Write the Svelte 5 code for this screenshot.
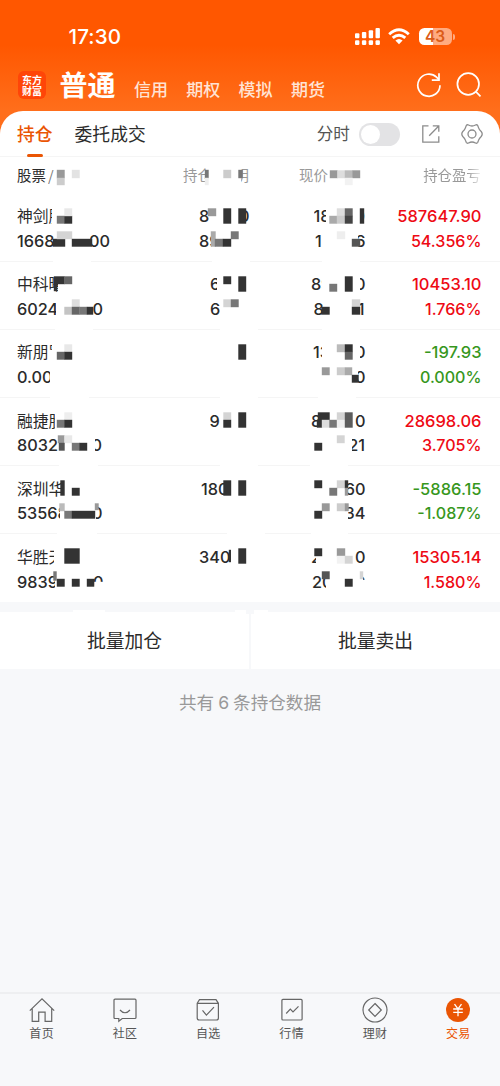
<script>
  const D = '#333', G = '#777', M = '#999', L = '#d4d4d4', X = '#eee', W = '#fff';

  // text fragment: [text, left edge, right edge, aligned to its right edge]
  // block: [x, y, width, height, fill], with y counted from the row's top
  const head = {
    line: [['股票', 17, 46], ['/', 48, 54, 0, 'slash'], ['持仓', 183, 206, 0, 'dim'], ['明', 241, 249, 1, 'dim'], ['现价', 299, 328, 0, 'dim'], ['持仓盈亏', 423.2, 482, 0, 'dim fade']],
    blocks: [[57,13,7.5,8,M],[57,21,7.5,7,'#ccc'],[72,13,7.5,8,'#e3e3e3'],[205,13,3.5,8,G],[205,21,3.5,7,X],[223.5,13,7.5,8,'#ccc'],[238.5,13,4,8,G],[330,13.5,7.5,7.5,M],[337.5,13.5,7.5,7.5,'#ddd'],[345,13.5,7.5,7.5,'#bbb'],[352.5,13.5,7.5,7.5,M],[345,21,7.5,7,'#f2f2f2']]
  };

  const rows = [
    { c: 'up', pl: '587647.90', pct: '54.356%',
      a: [['神剑股', 17, 51.5], ['8', 199, 209], ['0', 243, 249.5, 1], ['18', 313.5, 326], ['0', 360, 365, 1]],
      b: [['1668', 17, 54], ['00', 90, 110, 1], ['89', 199, 212], ['1', 315, 323], ['6', 358, 365.5, 1]],
      blocks: [[57,22,7.5,7.5,G],[64.5,22,7.5,7.5,D],[64.5,14.5,7.5,7.5,'#e8e8e8'],[53,45,12,7.5,D],[57,37.5,15,7.5,L],[72,45,20,7.5,D],[208,14.5,8,7.5,M],[223.5,14.5,7.5,15,D],[238.5,14.5,7.5,15,D],[211,37.5,4.5,15,'#aaa'],[215,45,8,7.5,G],[223,45,8,7.5,D],[231,37.5,7.5,7.5,G],[329.5,22,7.5,7.5,'#aaa'],[337,14.5,8,7.5,'#ddd'],[337,22,8,7.5,'#ccc'],[345,14.5,7.5,7.5,'#666'],[345,22,7.5,7.5,'#444'],[360,14.5,4,15,D],[337,37.5,8,7.5,X],[352,45,8,7.5,'#555']],
      gaps: [[53,91],[212,250],[322,360]] },
    { c: 'up', pl: '10453.10', pct: '1.766%',
      a: [['中科曙', 17, 57.5], ['6', 210, 217], ['89', 311, 321.5], ['0', 360, 365.5, 1]],
      b: [['6024', 17, 56], ['0', 93, 103, 1], ['6', 210, 220], ['8', 313.5, 323], ['1', 358, 364.5, 1]],
      blocks: [[54,14.5,10.5,7.5,D],[64.5,14.5,7.5,7.5,'#666'],[54,22,3,7,D],[64.5,45,7.5,7.5,'#c4c4c4'],[72,37.5,7.5,7.5,'#ddd'],[72,45,7.5,7.5,'#666'],[79.5,45,7.5,7.5,G],[87,45,6,7.5,D],[223.5,14.5,7.5,7.5,D],[238.5,14.5,7.5,15,D],[223.5,37.5,7.5,7.5,L],[231,37.5,7.5,7.5,G],[329.5,22,7.5,7.5,G],[345,14.5,7.5,15,D],[321.5,45,8,7.5,D],[352,37.5,8,7.5,L],[352,45,8,7.5,D]],
      gaps: [[55,93],[220,258],[322,360]] },
    { c: 'down', pl: '-197.93', pct: '0.000%',
      a: [['新朋股', 17, 52], ['13', 313, 321.5], ['0', 360, 365.5, 1]],
      b: [['0.00', 17, 49.5], ['0', 357.5, 365.5, 1]],
      blocks: [[48,20,5,12,W],[64.5,14.5,7.5,7.5,'#e8e8e8'],[57,22,7.5,7.5,'#666'],[64.5,22,7.5,7.5,D],[238.5,14.5,7.5,15,D],[337,14.5,8,7.5,'#bbb'],[345,14.5,7.5,7.5,D],[345,22,7.5,7.5,'#666'],[322,37.5,7.5,7.5,M],[337,37.5,8,7.5,'#ccc'],[345,37.5,7,7.5,'#aaa'],[352,45,6.5,7.5,D]],
      gaps: [[50,89],[220,258],[318,356]] },
    { c: 'up', pl: '28698.06', pct: '3.705%',
      a: [['融捷股', 17, 54.5], ['9', 209.5, 220], ['8', 311, 319], ['0', 354, 365.5, 1]],
      b: [['80321', 17, 60], ['0', 95, 102, 1], ['21', 352, 365, 1]],
      blocks: [[64.5,14.5,7.5,7.5,X],[57,22,7.5,7.5,G],[64.5,22,7.5,7.5,D],[58,37.5,6.5,7.5,M],[64.5,37.5,7.5,7.5,'#e8e8e8'],[59,45,5.5,7.5,'#555'],[72,45,7.5,7.5,G],[79.5,45,7.5,7.5,D],[223.5,14.5,7.5,7.5,L],[223.5,22,7.5,7.5,D],[238.5,14.5,7.5,15,D],[318,14.5,11.5,7.5,D],[317,22,5,7.5,D],[322,22,7.5,7.5,'#ddd'],[329.5,22,7.5,7.5,G],[337,14.5,8,7.5,L],[337,22,8,7.5,'#eee'],[345,14.5,7.5,15,'#5c5c5c'],[314.5,45,7.5,7.5,D],[337,37.5,7.5,7.5,L]],
      gaps: [[59,98],[220,258],[310,348]] },
    { c: 'down', pl: '-5886.15', pct: '-1.087%',
      a: [['深圳华', 17, 61.5], ['180', 201, 224], ['60', 346, 365.5, 1]],
      b: [['53568', 17, 59.5], ['0', 96, 102.5, 1], ['34', 348, 365.5, 1]],
      blocks: [[60.5,14.5,4,15,D],[72,22,7.5,7.5,D],[59.5,37.5,5,7.5,'#bbb'],[64.5,45,7.5,7.5,G],[72,45,23,7.5,D],[95,37.5,3.5,6.5,M],[223.5,14.5,7.5,15,D],[238.5,14.5,7.5,15,D],[314.5,14.5,7.5,7.5,D],[337,14.5,8,7.5,L],[345,14.5,3,7.5,D],[345,22,3,7.5,M],[329.5,22,7.5,7.5,G],[322,37.5,7.5,7.5,M],[314.5,45,7.5,7.5,D],[337,37.5,8,7.5,'#ccc'],[345,37.5,3.5,7.5,M]],
      gaps: [[57,97],[227,265],[311,348]] },
    { c: 'up', pl: '15305.14', pct: '1.580%',
      a: [['华胜天', 17, 53.5], ['340', 199, 229], ['2', 311, 316], ['0', 354, 365.5, 1]],
      b: [['9839', 17, 54.5], ['0', 93, 103.5, 1], ['20', 312, 326], ['9', 363, 365.5, 1]],
      blocks: [[311,14.5,5,9,W],[64.5,14.5,15,15,D],[53.5,37.5,3,9,G],[57,45,7.5,7.5,D],[72,45,7.5,7.5,D],[87,45,7.5,7.5,D],[94.5,48,10,6,W],[229,16,1.8,12,D],[238.5,14.5,7.5,15,D],[314.5,14.5,7.5,7.5,D],[337,14.5,8,7.5,M],[337,22,8,7.5,'#f2f2f2'],[345,22,7.5,7.5,L],[322,37.5,7.5,7.5,'#555'],[345,45,7.5,7.5,D],[360,37.5,3,7.5,L],[362,46,5,8,W]],
      gaps: [] }
  ];

  const pieces = (line) => line.map(([text, x0, x1, right, cls], i) => ({
    text, cls: cls ?? '', right, width: x1 - x0, gap: x0 - (i ? line[i - 1][2] : 0)
  }));
  const navs = ['首页', '社区', '自选', '行情', '理财', '交易'];
</script>

{#snippet fragments(line)}
  {#each pieces(line) as p}
    <span class="frag {p.cls}" class:right={p.right} style:width="{p.width}px" style:margin-left="{p.gap}px">{p.text}</span>
  {/each}
{/snippet}

{#snippet mosaic(blocks, gaps)}
  <svg class="mosaic" width="500" height="69">
    {#each gaps as g}<rect x={g[0]} y="66" width={g[1] - g[0]} height="3" fill="#fff" />{/each}
    {#each blocks as b}<rect x={b[0] - 0.2} y={b[1] - 0.2} width={b[2] + 0.4} height={b[3] + 0.4} fill={b[4]} />{/each}
  </svg>
{/snippet}

<div class="screen">
  <header>
    <div class="status">
      <span class="time">17:30</span>
      <svg class="signal" width="26" height="18" viewBox="0 0 26 18" fill="#fff">
        <rect x="0" y="5.3" width="4.4" height="5" rx="1"/><rect x="6.9" y="4" width="4.4" height="6.3" rx="1"/><rect x="13.7" y="2.2" width="4.4" height="8.1" rx="1"/><rect x="20.5" y="0" width="4.4" height="10.3" rx="1"/>
        <rect x="0" y="12.3" width="4.4" height="4.7" rx="1.2"/><rect x="6.9" y="12.3" width="4.4" height="4.7" rx="1.2"/><rect x="13.7" y="12.3" width="4.4" height="4.7" rx="1.2"/><rect x="20.5" y="12.3" width="4.4" height="4.7" rx="1.2"/>
      </svg>
      <svg class="wifi" width="22" height="17" viewBox="0 0 22 17" fill="none" stroke="#fff" stroke-width="2.9">
        <path d="M1.2 6.2Q11-2.8 20.8 6.2"/><path d="M4.7 9.9Q11 4.4 17.3 9.9"/><path d="M7.4 12.6Q11 9.4 14.6 12.6L11 16.3Z" fill="#fff" stroke="none"/>
      </svg>
      <div class="battery"><span>43</span></div><i class="cap"></i>
    </div>
    <div class="bar">
      <div class="logo"><span>东方</span><span>财富</span></div>
      <b>普通</b>
      <span class="mode">信用</span><span class="mode">期权</span><span class="mode">模拟</span><span class="mode">期货</span>
      <svg class="refresh" width="26" height="26" viewBox="0 0 26 26" fill="none" stroke="#fff" stroke-width="1.7">
        <path d="M24 13.3A11.1 11.1 0 1 1 20.5 5.1L23 7.7"/><path d="M23 1.3V8.1H15.8"/>
      </svg>
      <svg class="search" width="26" height="26" viewBox="0 0 26 26" fill="none" stroke="#fff" stroke-width="1.7">
        <circle cx="12.2" cy="12" r="10.8"/><path d="M19.8 19.7L24.5 24.3"/>
      </svg>
    </div>
  </header>

  <main>
    <div class="tabs">
      <span class="tab active">持仓</span><span class="tab">委托成交</span>
      <span class="minute">分时</span><div class="toggle"><i></i></div>
      <svg class="share" width="20" height="20" viewBox="0 0 20 20" fill="none" stroke="#8c8c8c" stroke-width="1.3">
        <path d="M7.5 1.8H1.8V18.2H17.8V12.2M8.2 11.8L17.5 2.2M11.8 1.8H17.8V7.8"/>
      </svg>
      <svg class="gear" width="22" height="22" viewBox="0 0 22 22" fill="none" stroke="#8c8c8c" stroke-width="1.3">
        <path d="M5.3 2.5Q6.1 1.3 7.5 2Q11 4 14.5 2Q15.9 1.3 16.7 2.5L17.5 4.6Q18 6.4 20.2 8.5Q22.2 11 20.2 13.5Q18 15.6 17.5 17.4L16.7 19.5Q15.9 20.7 14.5 20Q11 18 7.5 20Q6.1 20.7 5.3 19.5L4.5 17.4Q4 15.6 1.8 13.5Q-.2 11 1.8 8.5Q4 6.4 4.5 4.6Z"/><circle cx="11" cy="11" r="4"/>
      </svg>
    </div>
    <div class="head">{@render fragments(head.line)}{@render mosaic(head.blocks, [])}</div>
    {#each rows as r}
      <div class="row">
        <div class="line name">{@render fragments(r.a)}<span class="num {r.c}">{r.pl}</span></div>
        <div class="line">{@render fragments(r.b)}<span class="num pct {r.c}">{r.pct}</span></div>
        {@render mosaic(r.blocks, r.gaps)}
      </div>
    {/each}
  </main>

  <div class="actions"><button>批量加仓</button><button>批量卖出</button>
    <svg class="bumps" width="500" height="12"><path d="M73 10V8H105V10ZM235 10V8H246V12H235ZM254 12V8H268V12Z" fill="#fff"/><path d="M246 8H254V12H246Z" fill="#f7f8fa"/></svg>
  </div>
  <p class="count">共有<span>6</span>条持仓数据</p>

  <nav>
    {#each navs as n, i}
      <div class="nav" class:on={i === 5}>
        <svg width="26" height="26" viewBox="0 0 26 26" fill="none" stroke="#666" stroke-width="1.2">
          {#if i === 0}<path d="M.8 13.6L13 1.9L25.2 13.6M3.2 11.5V24.3H9.7V15.2H16.1V24.3H22.7V11.5"/>
          {:else if i === 1}<path d="M3 2.2H23Q24 2.2 24 3.2V20.5Q24 21.5 23 21.5H10.2L6.8 24.3V21.5H3Q2 21.5 2 20.5V3.2Q2 2.2 3 2.2ZM8 13Q13 18.5 18 13"/>
          {:else if i === 2}<path d="M2.2 6.3L4.5 2.6H21L23.4 6.3V21Q23.4 23 21.4 23H4.2Q2.2 23 2.2 21ZM2.2 6.3H23.4M7.5 13.3L11.4 18.1L19 10.2"/>
          {:else if i === 3}<rect x="2.9" y="2.4" width="20.2" height="20.6" rx="1"/><path d="M7.2 16.5L11.3 12.2L14 15L19.5 9.3"/>
          {:else if i === 4}<circle cx="13" cy="13" r="12"/><path d="M13 6.5L19.3 13L13 19.3L6.7 13Z"/>
          {:else}<circle cx="13" cy="13" r="12" fill="#ea5504" stroke="none"/><path d="M9.5 7.2L13 12L16.5 7.2M8.2 12H17.8M8.2 15.3H17.8M13 12V19.2" stroke="#fff" stroke-width="1.3"/>{/if}
        </svg>
        <span>{n}</span>
      </div>
    {/each}
  </nav>
</div>

<style>
  :global(body) { margin: 0; background: #f7f8fa; }
  .screen { width: 500px; height: 1086px; display: flex; flex-direction: column; overflow: hidden; font-family: Inter, "Noto Sans CJK SC", sans-serif; color: #2b2b2b; background: linear-gradient(#ff5700 0, #ff5700 45px, #ff6e1b 110px, #ff6e1b 150px, #f7f8fa 150px); }
  header { height: 111px; flex: none; color: #fff; }
  .status { display: flex; align-items: center; height: 46px; padding: 14px 0 0 68.5px; }
  .time { font: 500 20.6px/46px Inter; width: 286px; letter-spacing: .1px; }
  .signal { margin-top: -1px; }
  .wifi { margin-left: 7.5px; margin-top: -2px; }
  .battery { margin-left: 8.5px; margin-top: -1px; width: 33px; height: 17.5px; border-radius: 5.5px; background: linear-gradient(90deg, #fff 43%, #ffab80 43%); font: 600 15.5px/17.5px Inter; color: #dc5c18; text-align: center; }
  .cap { width: 2px; height: 6px; margin-left: 1px; border-radius: 0 2px 2px 0; background: #ffab80; margin-top: -1px; }
  .bar { display: flex; height: 51px; align-items: center; padding-left: 18px; }
  .logo { width: 28px; height: 28px; border-radius: 6px; background: #ff4508; display: flex; flex-direction: column; justify-content: center; font: 700 10px/11.5px "Noto Sans CJK SC"; text-align: center; margin-top: -1px; }
  .bar b { font: 700 28px/40px "Noto Sans CJK SC"; margin: -3px 18.5px 0 13.5px; width: 56px; }
  .mode { font: 500 17px/30px "Noto Sans CJK SC"; color: #ffe3d4; margin: 6px 18.3px 0 0; width: 34px; white-space: nowrap; }
  .refresh { margin: -1px 0 0 72.5px; }
  .search { margin: -1px 0 0 14.5px; }
  main { flex: none; background: #fff; border-radius: 23px 23px 0 0; height: 491px; }
  .tabs { height: 45px; display: flex; align-items: center; padding-left: 17px; border-bottom: 1px solid #f5f5f5; }
  .tab { font: 400 17.8px/45px "Noto Sans CJK SC"; margin-right: 22px; position: relative; white-space: nowrap; }
  .active { color: #ea5504; font-weight: 500; }
  .active::after { content: ''; position: absolute; left: 10px; bottom: -1px; width: 16px; height: 3px; border-radius: 2px; background: #ea5504; }
  .minute { font: 400 16.6px/45px "Noto Sans CJK SC"; color: #555; margin-left: 149px; }
  .toggle { width: 41px; height: 23px; border-radius: 12px; background: #e3e3e5; margin: 1px 0 0 9px; }
  .toggle i { display: block; width: 19px; height: 19px; margin: 2px; border-radius: 50%; background: #fff; }
  .share { margin-left: 21px; }
  .gear { margin-left: 20px; }
  .head, .row { position: relative; }
  .head { display: flex; height: 36.5px; font: 400 14.4px/35px "Noto Sans CJK SC"; }
  .frag { flex: none; overflow: hidden; white-space: nowrap; }
  .right { display: flex; justify-content: flex-end; }
  .dim { color: #999; }
  .slash { color: #777; }
  .fade { -webkit-mask: linear-gradient(90deg, #000 75%, transparent 103%); mask: linear-gradient(90deg, #000 75%, transparent 103%); }
  .row { height: 68.2px; box-sizing: border-box; border-bottom: 1px solid #f5f5f5; padding-top: 10.6px; }
  .row:last-child { border: 0; }
  .line { display: flex; height: 24.5px; font: 500 16.3px/24.5px Inter, "Noto Sans CJK SC"; }
  .name .frag:first-child { font-family: "Noto Sans CJK SC"; font-weight: 400; font-size: 15.8px; }
  .num { margin-left: auto; margin-right: 18.5px; font-size: 16.5px; }
  .pct { font-size: 16.1px; }
  .up { color: #ee0a14; }
  .down { color: #37971d; }
  .mosaic { position: absolute; left: 0; top: 0; }
  .actions { flex: none; display: flex; gap: 2px; padding-top: 10px; position: relative; }
  .bumps { position: absolute; left: 0; top: 0; }
  button { flex: 1; height: 57px; border: 0; padding: 0 0 2px; background: #fff; color: #2b2b2b; font: 400 18.8px/55px "Noto Sans CJK SC"; }
  .count { margin: 18px 0 0; text-align: center; font: 400 17.6px/30px "Noto Sans CJK SC"; color: #999; }
  .count span { font-family: Inter; margin: 0 4px; }
  nav { margin-top: auto; height: 94.5px; box-sizing: border-box; flex: none; border-top: 2px solid #eeeff1; display: flex; padding-top: 3.5px; }
  .nav { flex: 1; display: flex; flex-direction: column; align-items: center; color: #555; font: 400 12px/18px "Noto Sans CJK SC"; letter-spacing: .3px; }
  .nav span { margin-top: 1px; }
  .on { color: #ea5504; }
</style>
